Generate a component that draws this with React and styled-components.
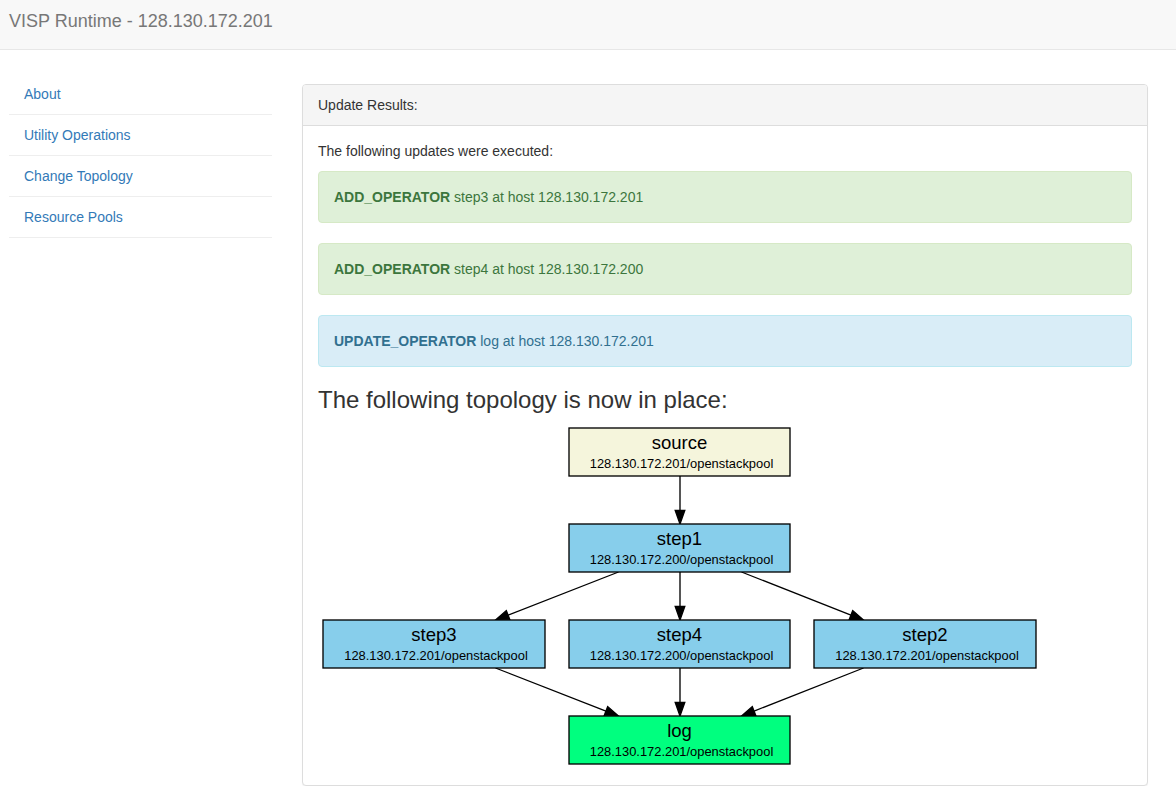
import React from "react";
import styled, { createGlobalStyle } from "styled-components";

const GlobalStyle = createGlobalStyle`
  html, body { margin: 0; padding: 0; background: #fff; }
  body {
    font-family: "Liberation Sans", Arial, Helvetica, sans-serif;
    font-size: 14px;
    line-height: 20px;
    color: #333;
  }
  * { box-sizing: border-box; }
`;

const Navbar = styled.header`
  height: 50px;
  background: #f8f8f8;
  border-bottom: 1px solid #e7e7e7;
  padding: 11px 9px 0;
`;

const Brand = styled.div`
  font-size: 18px;
  line-height: 20px;
  color: #777;
`;

const Layout = styled.div`
  display: flex;
  align-items: flex-start;
  gap: 30px;
  padding: 0 28px 0 9px;
`;

const Sidebar = styled.ul`
  list-style: none;
  margin: 24px 0 0;
  padding: 0;
  width: 263px;
  flex: none;
`;

const NavItem = styled.li`
  border-bottom: 1px solid #eee;
`;

const NavLink = styled.a`
  display: block;
  padding: 10px 15px;
  line-height: 20px;
  color: #337ab7;
  text-decoration: none;
`;

const Panel = styled.section`
  flex: 1;
  margin-top: 34px;
  border: 1px solid #ddd;
  border-radius: 4px;
  background: #fff;
  box-shadow: 0 1px 1px rgba(0, 0, 0, 0.05);
`;

const PanelHeading = styled.div`
  background: #f5f5f5;
  border-bottom: 1px solid #ddd;
  border-radius: 3px 3px 0 0;
  padding: 10px 15px;
  color: #333;
`;

const PanelBody = styled.div`
  padding: 15px 15px 16px;
`;

const Intro = styled.p`
  margin: 0 0 10px;
`;

const palette = {
  success: { bg: "#dff0d8", border: "#d6e9c6", color: "#3c763d" },
  info: { bg: "#d9edf7", border: "#bce8f1", color: "#31708f" },
};

const Alert = styled.div`
  padding: 15px;
  margin-bottom: 20px;
  border: 1px solid ${(p) => palette[p.$kind].border};
  border-radius: 4px;
  background: ${(p) => palette[p.$kind].bg};
  color: ${(p) => palette[p.$kind].color};
`;

const Heading = styled.h3`
  margin: 20px 0 10px;
  font-size: 24px;
  font-weight: 500;
  line-height: 1.1;
  color: #333;
`;

const Diagram = styled.svg`
  display: block;
  font-family: "Liberation Sans", Arial, sans-serif;
`;

const updates = [
  { kind: "success", op: "ADD_OPERATOR", text: "step3 at host 128.130.172.201" },
  { kind: "success", op: "ADD_OPERATOR", text: "step4 at host 128.130.172.200" },
  { kind: "info", op: "UPDATE_OPERATOR", text: "log at host 128.130.172.201" },
];

const nodes = [
  { name: "source", ip: "128.130.172.201/openstackpool", x: 251, y: 5, w: 221, fill: "#f5f5dc" },
  { name: "step1", ip: "128.130.172.200/openstackpool", x: 251, y: 101, w: 221, fill: "#87ceeb" },
  { name: "step3", ip: "128.130.172.201/openstackpool", x: 5, y: 197, w: 222, fill: "#87ceeb" },
  { name: "step4", ip: "128.130.172.200/openstackpool", x: 251, y: 197, w: 221, fill: "#87ceeb" },
  { name: "step2", ip: "128.130.172.201/openstackpool", x: 496, y: 197, w: 222, fill: "#87ceeb" },
  { name: "log", ip: "128.130.172.201/openstackpool", x: 251, y: 293, w: 221, fill: "#00ff7f" },
];

const edges = [
  [362, 53, 362, 101],
  [300.5, 149, 177.5, 197],
  [362, 149, 362, 197],
  [423.5, 149, 545.5, 197],
  [177.5, 245, 300.5, 293],
  [362, 245, 362, 293],
  [545.5, 245, 423.5, 293],
];

function Edge({ x1, y1, x2, y2 }) {
  const dx = x2 - x1;
  const dy = y2 - y1;
  const len = Math.hypot(dx, dy);
  const ux = dx / len;
  const uy = dy / len;
  const bx = x2 - ux * 13.5;
  const by = y2 - uy * 13.5;
  const px = -uy * 4.8;
  const py = ux * 4.8;
  return (
    <g>
      <line x1={x1} y1={y1} x2={bx} y2={by} stroke="#000" strokeWidth="1.33" />
      <polygon
        points={`${x2},${y2} ${bx + px},${by + py} ${bx - px},${by - py}`}
        fill="#000"
        stroke="#000"
        strokeWidth="1.33"
      />
    </g>
  );
}

function Topology() {
  return (
    <Diagram width="722" height="346" viewBox="0 0 722 346">
      {edges.map(([x1, y1, x2, y2], i) => (
        <Edge key={i} x1={x1} y1={y1} x2={x2} y2={y2} />
      ))}
      {nodes.map((n) => (
        <g key={n.name}>
          <rect x={n.x} y={n.y} width={n.w} height={48} fill={n.fill} stroke="#000" strokeWidth="1.33" />
          <text x={n.x + n.w / 2} y={n.y + 21} textAnchor="middle" fontSize="18.5" fill="#000">
            {n.name}
          </text>
          <text x={n.x + n.w / 2 + 2} y={n.y + 39.5} textAnchor="middle" fontSize="12.9" fill="#000">
            {n.ip}
          </text>
        </g>
      ))}
    </Diagram>
  );
}

export default function App() {
  return (
    <>
      <GlobalStyle />
      <Navbar>
        <Brand>VISP Runtime - 128.130.172.201</Brand>
      </Navbar>
      <Layout>
        <Sidebar>
          {["About", "Utility Operations", "Change Topology", "Resource Pools"].map((l) => (
            <NavItem key={l}>
              <NavLink href="#">{l}</NavLink>
            </NavItem>
          ))}
        </Sidebar>
        <Panel>
          <PanelHeading>Update Results:</PanelHeading>
          <PanelBody>
            <Intro>The following updates were executed:</Intro>
            {updates.map((u, i) => (
              <Alert key={i} $kind={u.kind}>
                <strong>{u.op}</strong> {u.text}
              </Alert>
            ))}
            <Heading>The following topology is now in place:</Heading>
            <Topology />
          </PanelBody>
        </Panel>
      </Layout>
    </>
  );
}
